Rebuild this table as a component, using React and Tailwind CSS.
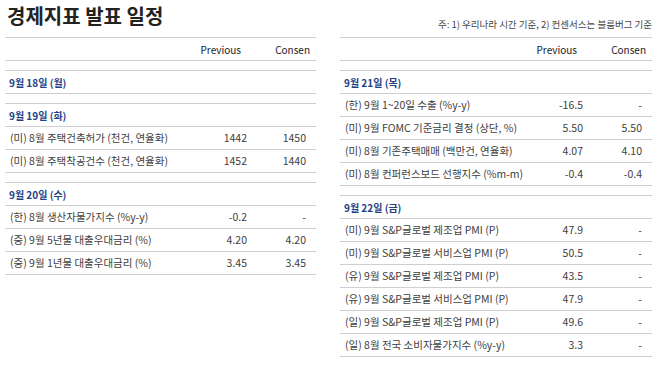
const leftData = [
    { date: "9월 18일 (월)", rows: [] },
    {
        date: "9월 19일 (화)",
        rows: [
            ["(미) 8월 주택건축허가 (천건, 연율화)", "1442", "1450"],
            ["(미) 8월 주택착공건수 (천건, 연율화)", "1452", "1440"],
        ],
    },
    {
        date: "9월 20일 (수)",
        rows: [
            ["(한) 8월 생산자물가지수 (%y-y)", "-0.2", "-"],
            ["(중) 9월 5년물 대출우대금리 (%)", "4.20", "4.20"],
            ["(중) 9월 1년물 대출우대금리 (%)", "3.45", "3.45"],
        ],
    },
];

const rightData = [
    {
        date: "9월 21일 (목)",
        rows: [
            ["(한) 9월 1~20일 수출 (%y-y)", "-16.5", "-"],
            ["(미) 9월 FOMC 기준금리 결정 (상단, %)", "5.50", "5.50"],
            ["(미) 8월 기존주택매매 (백만건, 연율화)", "4.07", "4.10"],
            ["(미) 8월 컨퍼런스보드 선행지수 (%m-m)", "-0.4", "-0.4"],
        ],
    },
    {
        date: "9월 22일 (금)",
        rows: [
            ["(미) 9월 S&P글로벌 제조업 PMI (P)", "47.9", "-"],
            ["(미) 9월 S&P글로벌 서비스업 PMI (P)", "50.5", "-"],
            ["(유) 9월 S&P글로벌 제조업 PMI (P)", "43.5", "-"],
            ["(유) 9월 S&P글로벌 서비스업 PMI (P)", "47.9", "-"],
            ["(일) 9월 S&P글로벌 제조업 PMI (P)", "49.6", "-"],
            ["(일) 8월 전국 소비자물가지수 (%y-y)", "3.3", "-"],
        ],
    },
];

function ScheduleTable({ sections }) {
    return (
        <div className="text-[10px]">
            {/* header */}
            <div className="flex h-[24px] items-center border-y border-[#cfcfcf] text-[#1a1a1a]">
                <div className="flex-1" />
                <div className="w-[60px] pr-[15px] text-right">Previous</div>
                <div className="w-[60px] pr-[6px] text-right">Consen</div>
            </div>

            {sections.map(section => (
                <div key={section.date} className="mt-[9px]">
                    <div className="flex h-[24px] items-center border-y border-[#cfcfcf] pl-[4px] font-bold text-[#233f86]">
                        {section.date}
                    </div>
                    {section.rows.map(([label, prev, consen]) => (
                        <div key={label} className="flex h-[23px] items-center border-b border-[#cfcfcf] text-[10.5px] text-[#404040]">
                            <div className="flex-1 pl-[5px] whitespace-nowrap">{label}</div>
                            <div className="w-[60px] pr-[9px] text-right">{prev}</div>
                            <div className="w-[60px] pr-[10px] text-right">{consen}</div>
                        </div>
                    ))}
                </div>
            ))}
        </div>
    );
}

function App() {
    return (
        <div className="w-[670px] h-[367px] bg-white font-['Noto_Sans_CJK_KR',sans-serif] overflow-hidden">
            <div className="flex gap-[24px] pl-[5px]">
                <div className="w-[311px]">
                    <div className="h-[37px] pl-[2px] pt-[2px]">
                        <h1 className="text-[20px] font-bold leading-[28px] text-[#222]">경제지표 발표 일정</h1>
                    </div>
                    <ScheduleTable sections={leftData} />
                </div>
                <div className="w-[312px]">
                    <div className="flex h-[37px] items-end justify-end pb-[6px]">
                        <p className="text-[9.5px] text-[#444]">주: 1) 우리나라 시간 기준, 2) 컨센서스는 블룸버그 기준</p>
                    </div>
                    <ScheduleTable sections={rightData} />
                </div>
            </div>
        </div>
    );
}

export default App;
